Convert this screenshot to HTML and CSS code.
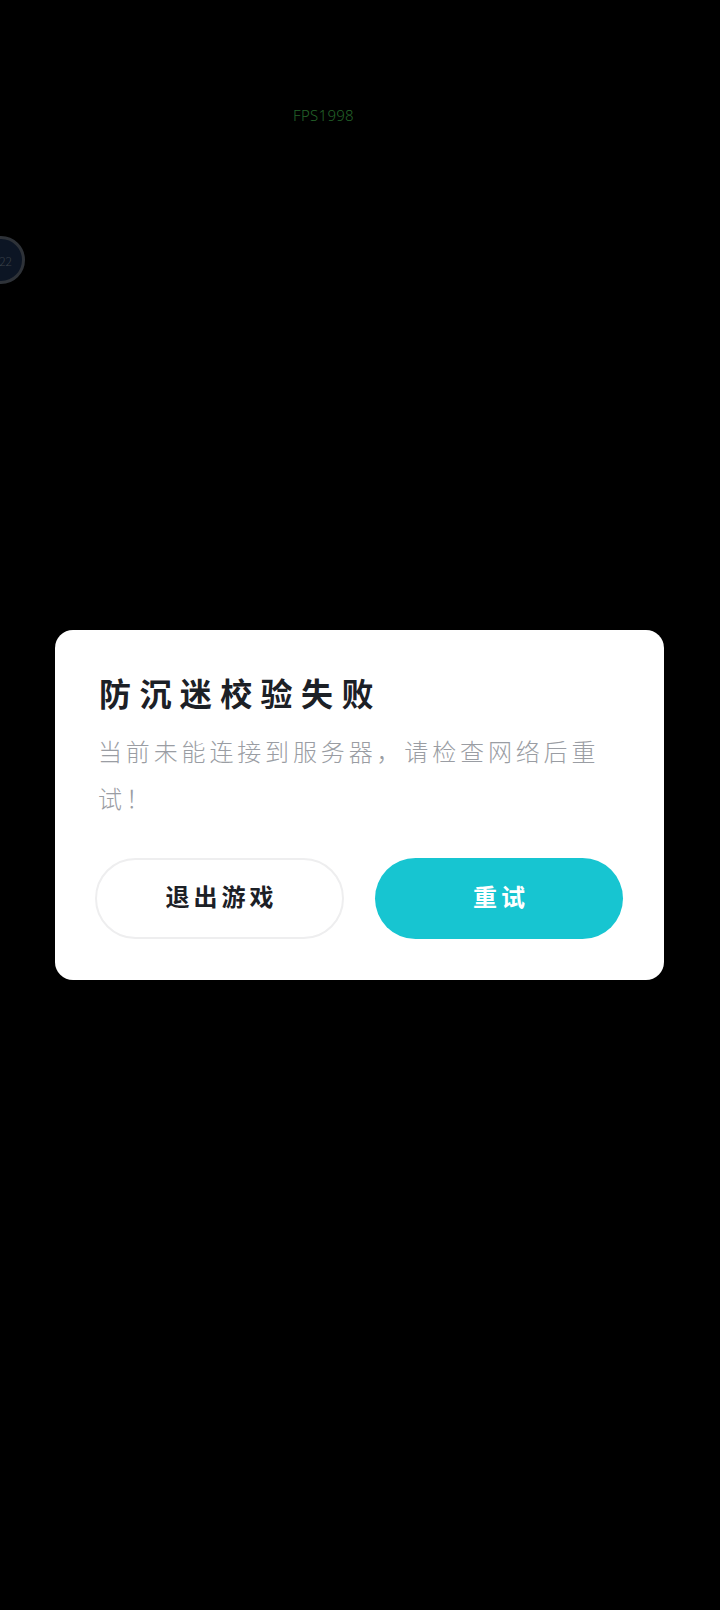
FILE: index.html
```html
<!DOCTYPE html>
<html lang="zh-CN">
<head>
<meta charset="utf-8">
<title>防沉迷校验失败</title>
<link rel="stylesheet" href="styles.css">
</head>
<body>
<main class="screen">
  <div class="fps">FPS1998</div>
  <div class="float-badge"><span>22</span></div>
  <section class="dialog">
    <h1 class="title">防沉迷校验失败</h1>
    <p class="message">当前未能连接到服务器，请检查网络后重试！</p>
    <div class="actions">
      <button class="btn btn-exit">退出游戏</button>
      <button class="btn btn-retry">重试</button>
    </div>
  </section>
</main>
</body>
</html>
```

FILE: styles.css
```css
* { box-sizing: border-box; }
html, body { margin: 0; padding: 0; background: #000; }
body { font-family: "Noto Sans CJK SC", "Noto Sans", sans-serif; }
.screen {
  position: relative;
  width: 720px;
  height: 1610px;
  overflow: hidden;
  background: #000;
  padding-top: 105px;
}
.fps {
  margin-left: 293px;
  height: 21px;
  line-height: 21px;
  font-family: "Noto Sans", sans-serif;
  font-weight: 300;
  font-size: 15px;
  letter-spacing: 0.3px;
  color: #24642a;
}
.float-badge {
  position: absolute;
  left: -23px;
  top: 236px;
  width: 48px;
  height: 48px;
  border-radius: 50%;
  border: 3px solid #2e3238;
  background: #0c1524;
  display: flex;
  align-items: center;
  justify-content: flex-end;
  padding-right: 10px;
  font-size: 12px;
  font-weight: 300;
  color: #3a4048;
}
.dialog {
  width: 609px;
  height: 350px;
  margin: 503.5px 0 0 55px;
  padding: 37px 40px 0 43px;
  background: #fff;
  border-radius: 18px;
}
.title {
  margin: 0 0 0 1px;
  height: 50px;
  line-height: 50px;
  font-size: 32px;
  font-weight: 700;
  letter-spacing: 8.4px;
  white-space: nowrap;
  color: #1c2026;
}
.message {
  margin: 10px 0 0;
  font-size: 24px;
  font-weight: 300;
  line-height: 47px;
  letter-spacing: 3.85px;
  color: #9a9da3;
}
.actions {
  display: flex;
  gap: 31px;
  margin: 37px 0 0 -3px;
  width: 528px;
}
.btn {
  flex: 0 0 auto;
  height: 81px;
  border-radius: 41px;
  font-family: inherit;
  font-size: 24px;
  font-weight: 700;
  letter-spacing: 4px;
  padding: 0 0 5px 4px;
}
.btn-exit {
  width: 249px;
  background: #fff;
  border: 2.5px solid #eeeeef;
  color: #1c2026;
}
.btn-retry {
  width: 248px;
  background: #17c5d1;
  border: 0;
  color: #fff;
}
```
